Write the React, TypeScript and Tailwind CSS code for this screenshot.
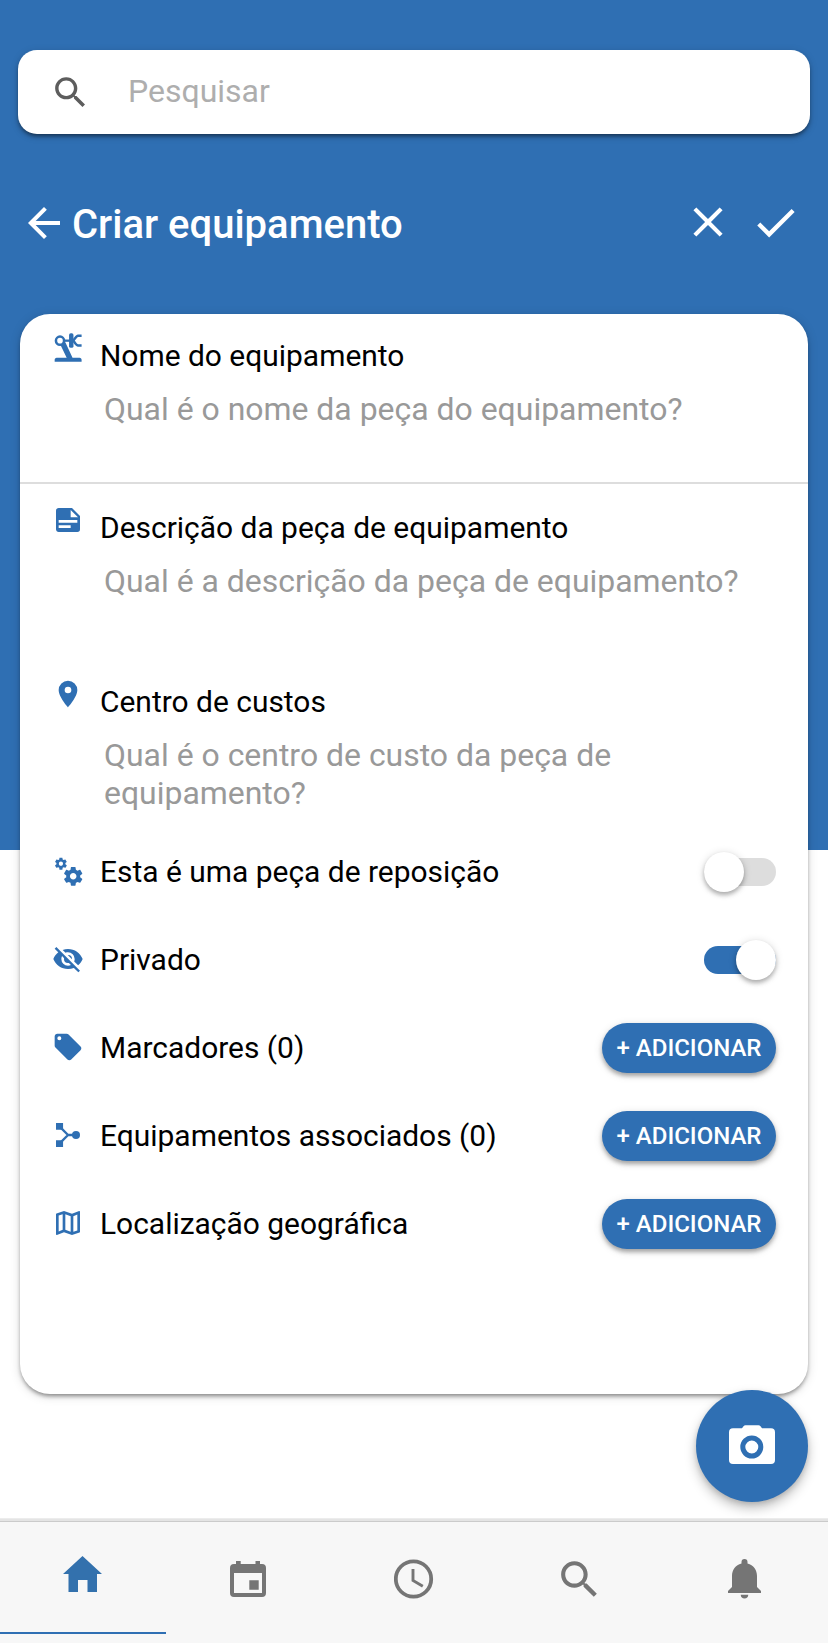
import type { ReactNode } from "react";

const COGS =
  "M15.9,18.45C17.25,18.45 18.35,17.35 18.35,16C18.35,14.65 17.25,13.55 15.9,13.55C14.54,13.55 13.45,14.65 13.45,16C13.45,17.35 14.54,18.45 15.9,18.45M21.1,16.68L22.58,17.84C22.71,17.95 22.75,18.13 22.66,18.29L21.26,20.71C21.17,20.86 21,20.92 20.83,20.86L19.09,20.16C18.73,20.44 18.33,20.67 17.91,20.85L17.64,22.7C17.62,22.87 17.47,23 17.3,23H14.5C14.32,23 14.18,22.87 14.15,22.7L13.89,20.85C13.46,20.67 13.07,20.44 12.71,20.16L10.96,20.86C10.81,20.92 10.62,20.86 10.54,20.71L9.14,18.29C9.05,18.13 9.09,17.95 9.22,17.84L10.7,16.68L10.65,16L10.7,15.31L9.22,14.16C9.09,14.05 9.05,13.86 9.14,13.71L10.54,11.29C10.62,11.13 10.81,11.07 10.96,11.13L12.71,11.84C13.07,11.56 13.46,11.32 13.89,11.15L14.15,9.29C14.18,9.13 14.32,9 14.5,9H17.3C17.47,9 17.62,9.13 17.64,9.29L17.91,11.15C18.33,11.32 18.73,11.56 19.09,11.84L20.83,11.13C21,11.07 21.17,11.13 21.26,11.29L22.66,13.71C22.75,13.86 22.71,14.05 22.58,14.16L21.1,15.31L21.15,16L21.1,16.68M6.69,8.07C7.56,8.07 8.26,7.37 8.26,6.5C8.26,5.63 7.56,4.92 6.69,4.92A1.58,1.58 0 0,0 5.11,6.5C5.11,7.37 5.82,8.07 6.69,8.07M10.03,6.94L11,7.68C11.07,7.75 11.09,7.87 11.03,7.97L10.13,9.53C10.08,9.63 9.96,9.67 9.86,9.63L8.74,9.18L8,9.62L7.81,10.81C7.79,10.92 7.7,11 7.59,11H5.79C5.67,11 5.58,10.92 5.56,10.81L5.4,9.62L4.64,9.18L3.52,9.63C3.41,9.67 3.3,9.63 3.24,9.53L2.34,7.97C2.28,7.87 2.31,7.75 2.39,7.68L3.34,6.94L3.31,6.5L3.34,6.06L2.39,5.32C2.31,5.25 2.28,5.13 2.34,5.03L3.24,3.47C3.3,3.37 3.41,3.32 3.52,3.37L4.63,3.82L5.4,3.38L5.56,2.19C5.58,2.08 5.67,2 5.79,2H7.59C7.7,2 7.79,2.08 7.81,2.19L8,3.38L8.74,3.82L9.86,3.37C9.96,3.32 10.08,3.37 10.13,3.47L11.03,5.03C11.09,5.13 11.07,5.25 11,5.32L10.03,6.06L10.06,6.5L10.03,6.94Z";
const EYE_OFF =
  "M11.83,9L15,12.16C15,12.11 15,12.05 15,12A3,3 0 0,0 12,9C11.94,9 11.89,9 11.83,9M7.53,9.8L9.08,11.35C9.03,11.56 9,11.77 9,12A3,3 0 0,0 12,15C12.22,15 12.44,14.97 12.65,14.92L14.2,16.47C13.53,16.8 12.79,17 12,17A5,5 0 0,1 7,12C7,11.21 7.2,10.47 7.53,9.8M2,4.27L4.28,6.55L4.73,7C3.08,8.3 1.78,10 1,12C2.73,16.39 7,19.5 12,19.5C13.55,19.5 15.03,19.2 16.38,18.66L16.81,19.08L19.73,22L21,20.73L3.27,3M12,7A5,5 0 0,1 17,12C17,12.64 16.87,13.26 16.64,13.82L19.57,16.75C21.07,15.5 22.27,13.86 23,12C21.27,7.61 17,4.5 12,4.5C10.6,4.5 9.26,4.75 8,5.2L10.17,7.35C10.74,7.13 11.35,7 12,7Z";
const TAG =
  "M5.5,7A1.5,1.5 0 0,1 4,5.5A1.5,1.5 0 0,1 5.5,4A1.5,1.5 0 0,1 7,5.5A1.5,1.5 0 0,1 5.5,7M21.41,11.58L12.41,2.58C12.05,2.22 11.55,2 11,2H4C2.89,2 2,2.89 2,4V11C2,11.55 2.22,12.05 2.59,12.41L11.58,21.41C11.95,21.77 12.45,22 13,22C13.55,22 14.05,21.77 14.41,21.41L21.41,14.41C21.78,14.05 22,13.55 22,13C22,12.44 21.77,11.94 21.41,11.58Z";
const NOTE =
  "M14,10H19.5L14,4.5V10M5,3H15L21,9V19A2,2 0 0,1 19,21H5C3.89,21 3,20.1 3,19V5C3,3.89 3.89,3 5,3M5,12V14H19V12H5M5,16V18H14V16H5Z";
const PIN =
  "M12,11.5A2.5,2.5 0 0,1 9.5,9A2.5,2.5 0 0,1 12,6.5A2.5,2.5 0 0,1 14.5,9A2.5,2.5 0 0,1 12,11.5M12,2A7,7 0 0,0 5,9C5,14.25 12,22 12,22C12,22 19,14.25 19,9A7,7 0 0,0 12,2Z";
const MAP =
  "M20.5 3l-.16.03L15 5.1 9 3 3.36 4.9c-.21.07-.36.25-.36.48V20.5c0 .28.22.5.5.5l.16-.03L9 18.9l6 2.1 5.64-1.9c.21-.07.36-.25.36-.48V3.5c0-.28-.22-.5-.5-.5zM10 5.47l4 1.4v11.66l-4-1.4V5.47zm-5 .99l3-1.01v11.7l-3 1.16V6.46zm14 11.08l-3 1.01V6.86l3-1.16v11.84z";
const SEARCH =
  "M15.5 14h-.79l-.28-.27C15.41 12.59 16 11.11 16 9.5 16 5.91 13.09 3 9.5 3S3 5.91 3 9.5 5.91 16 9.5 16c1.61 0 3.09-.59 4.23-1.57l.27.28v.79l5 4.99L20.49 19l-4.99-5zm-6 0C7.01 14 5 11.99 5 9.5S7.01 5 9.5 5 14 7.01 14 9.5 11.99 14 9.5 14z";

function Icon({ d, className, children }: { d?: string; className: string; children?: ReactNode }) {
  return (
    <svg viewBox="0 0 24 24" fill="currentColor" className={`block shrink-0 ${className}`} aria-hidden="true">
      {d && <path d={d} />}
      {children}
    </svg>
  );
}

function RobotArm() {
  return (
    <Icon className="size-8">
      <g fill="none" stroke="currentColor">
        <circle cx="6" cy="6.5" r="3.05" strokeWidth="1.9" />
        <path d="M9 6.500h5" strokeWidth="1.700" />
        <path d="M22.200 2.800h-2.700q-1.200.2-3.500 3.700 2.300 3.500 3.500 3.700h2.700" strokeWidth="1.900" />
      </g>
      <rect x="12.800" y="1" width="3.300" height="10.900" rx="1.300" />
      <path d="M6.300 9.600L10 7.600l5.400 11.800h5.300c.9 0 1.500.8 1.500 1.600v1.400H2V21c0-.8.6-1.600 1.500-1.600h7.500z" />
    </Icon>
  );
}

function Relation() {
  return (
    <Icon className="size-8">
      <path d="M3 3h5.3v5H3zM3 16h5.3v5H3z" />
      <circle cx="18" cy="12" r="3" />
      <path d="M6.5 6.5L12 12l-5.5 5.5M12 12h5" fill="none" stroke="currentColor" strokeWidth="1.7" />
    </Icon>
  );
}

function Field({ icon, label, hint, className }: { icon: ReactNode; label: string; hint: string; className: string }) {
  return (
    <div className={`flex pr-8 pl-8 ${className}`}>
      <div className="w-12 shrink-0 pt-[18px] text-[#2f6fb3]">{icon}</div>
      <div className="min-w-0 flex-1">
        <div className="pt-[22px] text-[29.95px] leading-10 whitespace-nowrap text-black">{label}</div>
        <div className="mt-[14px] pl-1 text-[31.95px] leading-[38px] text-[#999]">{hint}</div>
      </div>
    </div>
  );
}

function Row({ icon, label, children }: { icon: ReactNode; label: string; children: ReactNode }) {
  return (
    <div className="flex h-[88px] items-center pr-8 pl-8">
      <div className="w-12 shrink-0 pb-[2px] text-[#2f6fb3]">{icon}</div>
      <div className="flex-1 text-[29.95px] leading-10 whitespace-nowrap text-black">{label}</div>
      {children}
    </div>
  );
}

function Toggle({ on }: { on: boolean }) {
  return (
    <div className={`flex h-7 w-[72px] items-center rounded-full ${on ? "justify-end bg-[#2f6fb3]" : "bg-[#ddd]"}`}>
      <div className="size-10 shrink-0 rounded-full bg-white shadow-[0_3px_4px_rgba(0,0,0,0.26),0_1px_8px_rgba(0,0,0,0.14)]" />
    </div>
  );
}

function AddButton() {
  return (
    <button className="h-[50px] w-[174px] rounded-full bg-[#2f6fb3] text-[24px] font-medium whitespace-nowrap text-white shadow-[0_3px_4px_rgba(0,0,0,0.3),0_2px_10px_rgba(0,0,0,0.12)]">
      + ADICIONAR
    </button>
  );
}

export default function App() {
  return (
    <div className="relative flex h-[1643px] w-full flex-col overflow-hidden bg-[linear-gradient(#2f6fb3_850px,#fff_850px)] font-['Roboto',sans-serif]">
      <div className="mx-[18px] mt-[50px] flex h-[84px] shrink-0 items-center rounded-[19px] bg-white pl-8 shadow-[0_3px_4px_-1px_rgba(0,0,0,0.5),0_2px_8px_rgba(0,0,0,0.15)]">
        <Icon d={SEARCH} className="size-[41px] text-[#5d5d5d]" />
        <span className="pb-[3px] pl-[37px] text-[32px] text-[#aeaeae]">Pesquisar</span>
      </div>

      <header className="mt-[65px] flex h-12 shrink-0 items-center pl-5 text-white">
        <Icon className="size-12" d="M20 11H7.83l5.59-5.59L12 4l-8 8 8 8 1.41-1.41L7.83 13H20v-2z" />
        <h1 className="flex-1 pt-1 pl-1 text-[40px] leading-[46px] font-medium whitespace-nowrap">Criar equipamento</h1>
        <Icon
          className="mr-[17px] mb-[2px] size-[50px]"
          d="M19 6.41L17.59 5 12 10.59 6.41 5 5 6.41 10.59 12 5 17.59 6.41 19 12 13.41 17.59 19 19 17.59 13.41 12z"
        />
        <Icon className="mr-[27px] mb-[2px] size-[51px]" d="M9 16.17L4.83 12l-1.42 1.41L9 19 21 7l-1.41-1.41z" />
      </header>

      <main className="mx-5 mt-[67px] h-[1080px] shrink-0 rounded-[30px] bg-white shadow-[0_3px_4px_-1px_rgba(0,0,0,0.42),0_2px_11px_rgba(0,0,0,0.15)]">
        <Field
          className="h-[170px] border-b-2 border-[#ddd]"
          icon={<RobotArm />}
          label="Nome do equipamento"
          hint="Qual é o nome da peça do equipamento?"
        />
        <Field
          className="mt-[2px] h-[174px]"
          icon={<Icon d={NOTE} className="size-8" />}
          label="Descrição da peça de equipamento"
          hint="Qual é a descrição da peça de equipamento?"
        />
        <Field
          className="h-[168px]"
          icon={<Icon d={PIN} className="size-8" />}
          label="Centro de custos"
          hint="Qual é o centro de custo da peça de equipamento?"
        />
        <Row icon={<Icon d={COGS} className="size-8" />} label="Esta é uma peça de reposição">
          <Toggle on={false} />
        </Row>
        <Row icon={<Icon d={EYE_OFF} className="size-8" />} label="Privado">
          <Toggle on />
        </Row>
        <Row icon={<Icon d={TAG} className="size-8" />} label="Marcadores (0)">
          <AddButton />
        </Row>
        <Row icon={<Relation />} label="Equipamentos associados (0)">
          <AddButton />
        </Row>
        <Row icon={<Icon d={MAP} className="size-8" />} label="Localização geográfica">
          <AddButton />
        </Row>
      </main>

      <button className="absolute top-[1390px] right-5 size-28 rounded-full bg-[#2f6fb3] text-white shadow-[0_6px_12px_rgba(0,0,0,0.25),0_2px_5px_rgba(0,0,0,0.12)]">
        <svg viewBox="0 0 112 112" className="block size-28" fill="currentColor" aria-hidden="true">
          <path d="M37 38.300H46L47.500 36.300Q48.300 35.300 49.500 35.300H62.500Q63.700 35.300 64.500 36.300L66 38.300H75Q79 38.300 79 42.300V70Q79 74 75 74H37Q33 74 33 70V42.300Q33 38.300 37 38.300Z" />
          <circle cx="55.800" cy="57" r="9" fill="none" stroke="#2f6fb3" strokeWidth="5" />
        </svg>
      </button>

      <nav className="mt-auto h-[125px] shrink-0 border-t border-[#ececec] bg-[#f7f7f7]">
        <div className="h-[2px] bg-[#e4e4e4]" />
        <div className="h-px bg-[#cbcbcb]" />
        <div className="grid h-[110px] grid-cols-5 text-[#757575]">
          <div className="flex justify-center pt-[34px] text-[#3371ad]">
            <svg viewBox="0 0 39 36" className="h-9 w-[39px]" fill="currentColor" aria-hidden="true">
              <path d="M19.500 0L39 18h-5v18h-9.500V24h-9.500v12H5.500V18H0z" />
            </svg>
          </div>
          <div className="flex justify-center pt-[39px]">
            <svg viewBox="0 0 36 36" className="size-9" fill="currentColor" aria-hidden="true">
              <path
                fillRule="evenodd"
                d="M6 0h4.700v3h14.800V0H30v3h2q4 0 4 4v25q0 4-4 4H4q-4 0-4-4V7q0-4 4-4h2zM4 12v20h28V12zM19.300 19.300h9.400v9.400h-9.400z"
              />
            </svg>
          </div>
          <div className="flex justify-center pt-[37px]">
            <svg viewBox="0 0 40 40" className="size-10" fill="none" stroke="currentColor" aria-hidden="true">
              <circle cx="19.500" cy="20" r="17.700" strokeWidth="3.800" />
              <path d="M19 10v11.500l9.800 5.800" strokeWidth="2.900" />
            </svg>
          </div>
          <div className="flex justify-center pt-[33px]">
            <Icon d={SEARCH} className="size-[49px]" />
          </div>
          <div className="flex justify-center pt-[37px] pr-[2px]">
            <svg viewBox="0 0 33 40" className="h-10 w-[33px]" fill="currentColor" aria-hidden="true">
              <path d="M13.500 4.500V3a3 3 0 0 1 6 0v1.500C25.500 6 29 11 29 17v11l4 4v2H0v-2l4-4V17C4 11 7.500 6 13.500 4.500zM12.700 35.700h7.600q-.3 3.800-3.800 3.800t-3.800-3.800z" />
            </svg>
          </div>
        </div>
        <div className="h-[2px] w-1/5 bg-[#2f6fb3]" />
      </nav>
    </div>
  );
}
